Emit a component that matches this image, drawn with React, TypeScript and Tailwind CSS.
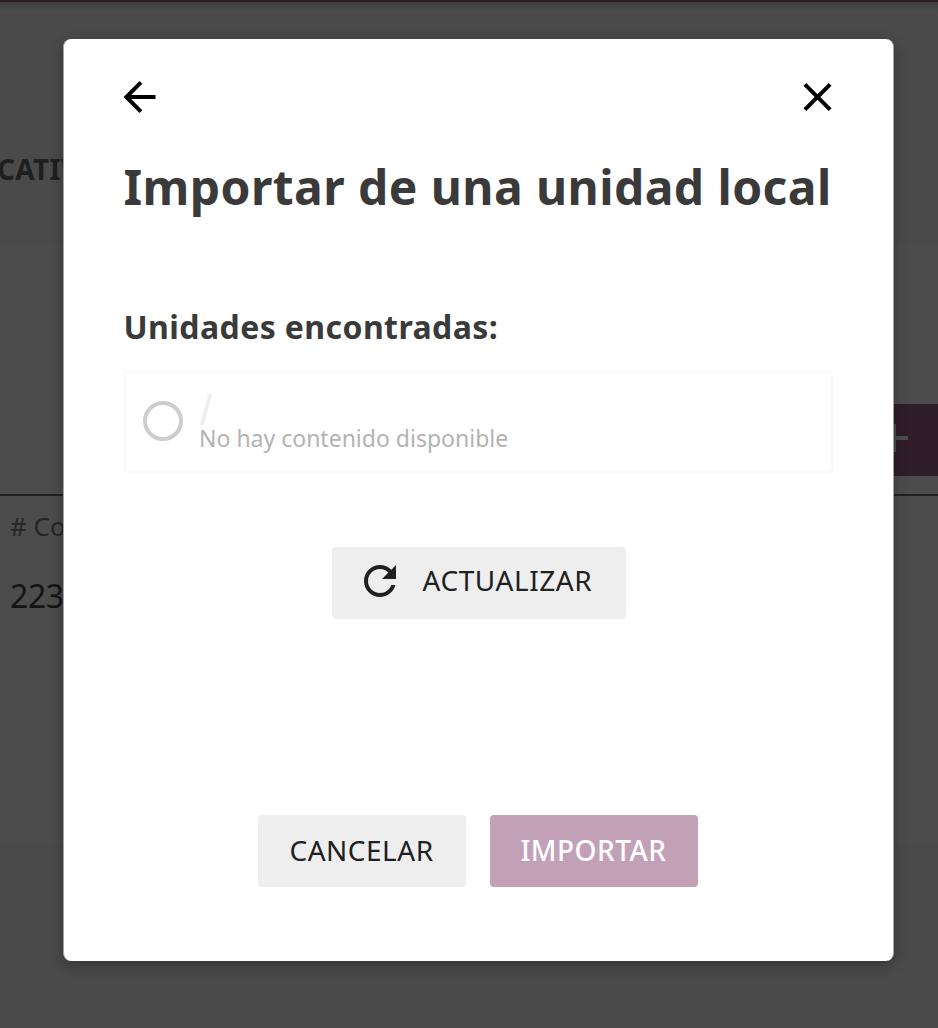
import React from 'react';

function Backdrop() {
  return (
    <div className="flex h-[1028px] w-[938px] flex-col overflow-hidden bg-[#4a4a4a]" aria-hidden="true">
      <div className="h-[2px] shrink-0 bg-[#2f1d29]" />
      <div className="h-2 shrink-0 bg-gradient-to-b from-[#3d3d3d] to-[#4a4a4a]" />
      <div className="flex h-[233px] shrink-0 pt-[140px]">
        <span className="-ml-[3px] text-[28px] font-bold leading-[38px] tracking-[0.3px] text-[#1f1f1f]">CATIVOS</span>
      </div>
      <div className="flex h-[602px] shrink-0 flex-col bg-[#4c4c4c] pt-[161px]">
        <div className="flex h-[72px] justify-end">
          <div className="flex w-[78px] items-center bg-[#2f1d29] pl-[20px]">
            <svg width="28" height="28" viewBox="0 0 28 28" className="-mt-1" fill="#4c4c4c">
              <path d="M12 0h4v12h12v4H16v12h-4V16H0v-4h12z" />
            </svg>
          </div>
        </div>
        <div className="mt-[18px] h-[2px] bg-[#1f1f1f]" />
        <span className="mt-[12px] pl-[10px] text-[26px] leading-[36px] text-[#262626]"># Contenidos</span>
        <span className="mt-[30px] pl-[10px] text-[32px] leading-[44px] tracking-[-0.4px] text-[#141414]">223</span>
      </div>
    </div>
  );
}

export default function App() {
  return (
    <div className="relative h-[1028px] w-[938px] overflow-hidden font-['Noto_Sans',sans-serif]">
      <Backdrop />
      <div className="absolute inset-0 flex pl-[63px] pt-[39px]">
        <div
          role="dialog"
          className="flex h-[922px] w-[831px] flex-col rounded-[8px] border-x border-[#a4a4a4] bg-white pl-[60px] pr-[59px] shadow-[0_4px_14px_rgba(0,0,0,0.3)]"
        >
          <div className="mt-[34px] flex h-12 items-center justify-between">
            <button aria-label="Volver" className="-ml-2">
              <svg width="48" height="48" viewBox="0.25 0 24 24">
                <path d="M20 11H7.83l5.59-5.59L12 4l-8 8 8 8 1.41-1.41L7.83 13H20v-2z" />
              </svg>
            </button>
            <button aria-label="Cerrar" className="-mr-2">
              <svg width="48" height="48" viewBox="0.25 0 24 24">
                <path d="M19 6.41L17.59 5 12 10.59 6.41 5 5 6.41 10.59 12 5 17.59 6.41 19 12 13.41 17.59 19 19 17.59 13.41 12z" />
              </svg>
            </button>
          </div>
          <h1 className="-ml-[0.5px] mt-[33px] whitespace-nowrap text-[48px] font-bold leading-[66px] tracking-[0.41px] text-[#3a3a3a]">
            Importar de una unidad local
          </h1>
          <h2 className="-ml-[0.5px] mt-[85px] whitespace-nowrap text-[32px] font-bold leading-[44px] tracking-[0.41px] text-[#3a3a3a]">
            Unidades encontradas:
          </h2>
          <div className="mt-[22px] flex h-[102px] w-[709px] shrink-0 border-2 border-[#fafafa] pl-[17px]">
            <span className="mt-[28px] size-10 shrink-0 rounded-full border-4 border-[#cdcdcd]" />
            <div className="ml-[16px] flex flex-col">
              <span className="mt-[21px] h-[28px] pl-px font-['Liberation_Sans',sans-serif] text-[43px] leading-[32px] text-[#eee]">/</span>
              <span className="whitespace-nowrap text-[23px] leading-[32px] text-[#b3b3b3]">No hay contenido disponible</span>
            </div>
          </div>
          <button className="mr-px mt-[74px] flex h-[72px] w-[294px] shrink-0 self-center rounded-[4px] bg-[#eee] pl-6 text-[28px] leading-[67px] tracking-[0.55px] text-[#202020]">
            <svg width="48" height="48" viewBox="0 0 24 24" fill="#202020" className="mt-[10px]">
              <path d="M17.65 6.35C16.2 4.9 14.21 4 12 4c-4.42 0-7.99 3.58-7.99 8s3.57 8 7.99 8c3.73 0 6.84-2.55 7.73-6h-2.08c-.82 2.33-3.04 4-5.65 4-3.31 0-6-2.69-6-6s2.69-6 6-6c1.66 0 3.14.69 4.22 1.78L13 11h7V4l-2.35 2.35z" />
            </svg>
            <span className="ml-[19px]">ACTUALIZAR</span>
          </button>
          <div className="mt-[196px] flex justify-center gap-6 pr-[3px] text-[28px] leading-[70px] tracking-[0.5px]">
            <button className="flex h-[72px] w-[208px] justify-center rounded-[4px] bg-[#eee] text-[#202020]">CANCELAR</button>
            <button className="flex h-[72px] w-[208px] justify-center rounded-[4px] bg-[#c2a1b8] font-medium text-white">IMPORTAR</button>
          </div>
        </div>
      </div>
    </div>
  );
}
